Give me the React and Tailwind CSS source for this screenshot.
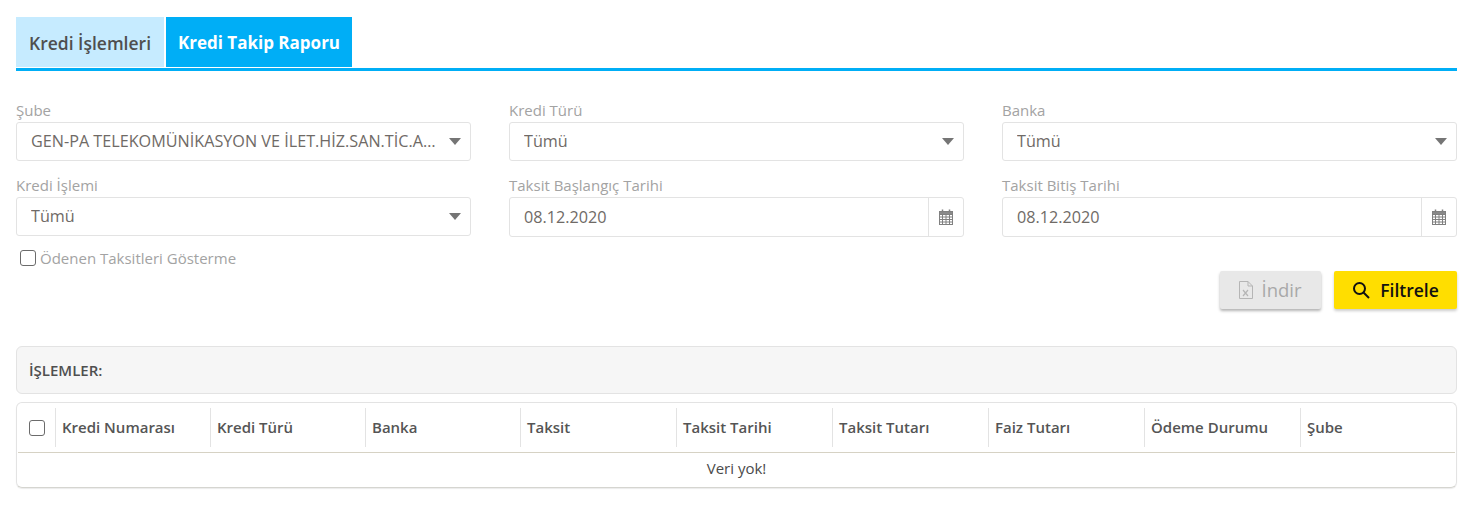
import React from "react";

const COLUMNS = ["Kredi Numarası", "Kredi Türü", "Banka", "Taksit", "Taksit Tarihi", "Taksit Tutarı", "Faiz Tutarı", "Ödeme Durumu", "Şube"];

function Field({ label, children }) {
  return (
    <div className="h-[75px]">
      <div className="h-[22px] text-[15px] leading-[20px] text-[#a3a3a3]">{label}</div>
      {children}
    </div>
  );
}

function Select({ value }) {
  return (
    <div className="flex h-[39px] items-center rounded-[3px] border border-[#e3e3e3] bg-white pl-[14px] pr-[9px]">
      <span className="flex-1 truncate text-[16.2px] text-[#6f6a66]">{value}</span>
      <span className="ml-[10px] h-0 w-0 border-x-[6.5px] border-t-[7px] border-x-transparent border-t-[#757575]" />
    </div>
  );
}

function CalendarIcon() {
  return (
    <svg width="14" height="16" viewBox="0 0 14 16" fill="none" stroke="#808080" strokeWidth="1">
      <rect x="0.5" y="2.5" width="13" height="13" fill="#fff" />
      <rect x="0.5" y="2.5" width="13" height="3" fill="#8a8a8a" />
      <path d="M0.5 8h13M0.5 10.5h13M0.5 13h13M3.5 5.5v10M7 5.5v10M10.5 5.5v10" />
      <path d="M3.5 0.5v3M10.5 0.5v3" strokeWidth="1.5" />
    </svg>
  );
}

function DateInput({ value }) {
  return (
    <div className="flex h-[40px] items-center rounded-[3px] border border-[#e3e3e3] bg-white">
      <span className="flex-1 pl-[14px] text-[16.2px] text-[#6f6a66]">{value}</span>
      <span className="flex h-full w-[35px] items-center justify-center border-l border-[#e3e3e3]">
        <CalendarIcon />
      </span>
    </div>
  );
}

export default function App() {
  return (
    <div className="min-h-[510px] bg-white pl-[16px] pr-[22px] pt-[17px] font-['Open_Sans',sans-serif]">
      {/* Tabs */}
      <div className="flex h-[54px] gap-[2px] border-b-[3px] border-[#00aef6] pb-px">
        <div className="flex w-[148px] items-center justify-center bg-[#c6ebff] pt-[2px] text-[17.5px] font-semibold text-[#4f4f4f]">Kredi İşlemleri</div>
        <div className="flex w-[186px] items-center justify-center bg-[#00aef6] pt-[2px] text-[17px] font-bold text-white">Kredi Takip Raporu</div>
      </div>

      {/* Filters */}
      <div className="mt-[29px] grid grid-cols-3 gap-x-[38px]">
        <Field label="Şube"><Select value="GEN-PA TELEKOMÜNİKASYON VE İLET.HİZ.SAN.TİC.A.Ş." /></Field>
        <Field label="Kredi Türü"><Select value="Tümü" /></Field>
        <Field label="Banka"><Select value="Tümü" /></Field>
        <Field label="Kredi İşlemi"><Select value="Tümü" /></Field>
        <Field label="Taksit Başlangıç Tarihi"><DateInput value="08.12.2020" /></Field>
        <Field label="Taksit Bitiş Tarihi"><DateInput value="08.12.2020" /></Field>
      </div>

      <label className="ml-[4px] -mt-px flex h-[18px] items-center gap-[4px] text-[15px] text-[#a3a3a3]">
        <span className="h-[16px] w-[16px] rounded-[3px] border border-[#6b6b6b] bg-white" />
        Ödenen Taksitleri Gösterme
      </label>

      {/* Actions */}
      <div className="mt-[4px] flex justify-end gap-[13px]">
        <button className="flex h-[38px] w-[101px] items-center justify-center gap-[8px] rounded-[2px] bg-[#e8e8e8] text-[18.5px] text-[#a8a8a8] shadow-[0_2px_3px_rgba(0,0,0,0.3)]">
          <svg width="14" height="18" viewBox="0 0 14 18" fill="none" stroke="#b5b5b5" strokeWidth="1">
            <path d="M0.5 0.5h8.5l4.5 4.5v12.5H0.5z" />
            <path d="M9 0.5v4.5h4.5" />
            <path d="M4 9l5 6M9 9l-5 6" strokeWidth="1.2" />
          </svg>
          İndir
        </button>
        <button className="flex h-[38px] w-[123px] items-center justify-center gap-[10px] rounded-[2px] bg-[#ffde00] text-[17.5px] font-semibold text-[#111] shadow-[0_2px_3px_rgba(0,0,0,0.2)]">
          <svg width="18" height="18" viewBox="0 0 18 18" fill="none" stroke="#111" strokeWidth="2">
            <circle cx="7.5" cy="7.5" r="5.5" />
            <path d="M11.5 11.5l5.5 5.5" />
          </svg>
          Filtrele
        </button>
      </div>

      {/* Panel header */}
      <div className="mt-[37px] flex h-[48px] items-center rounded-[6px] border border-[#e3e3e3] bg-[#f6f6f6] pl-[12px] text-[15px] font-semibold text-[#4f4f4f]">
        İŞLEMLER:
      </div>

      {/* Table */}
      <div className="mt-[8px] h-[86px] rounded-[6px] border border-[#e3e3e3] border-b-[#d5d5d0] shadow-[0_1px_1px_rgba(0,0,0,0.08)]">
        <div className="mx-px grid h-[50px] grid-cols-[37px_repeat(3,155px)_repeat(5,156px)_1fr] items-center border-b border-[#d6d2c4]">
          <div className="flex justify-center">
            <span className="h-[16px] w-[16px] rounded-[3px] border border-[#6b6b6b] bg-white" />
          </div>
          {COLUMNS.map((c) => (
            <div key={c} className="flex h-[39px] items-center border-l border-[#e3e3e3] pl-[6px] text-[15px] font-semibold text-[#555]">{c}</div>
          ))}
        </div>
        <div className="flex h-[34px] items-center justify-center pb-[3px] text-[15px] text-[#4a4a4a]">Veri yok!</div>
      </div>
    </div>
  );
}
